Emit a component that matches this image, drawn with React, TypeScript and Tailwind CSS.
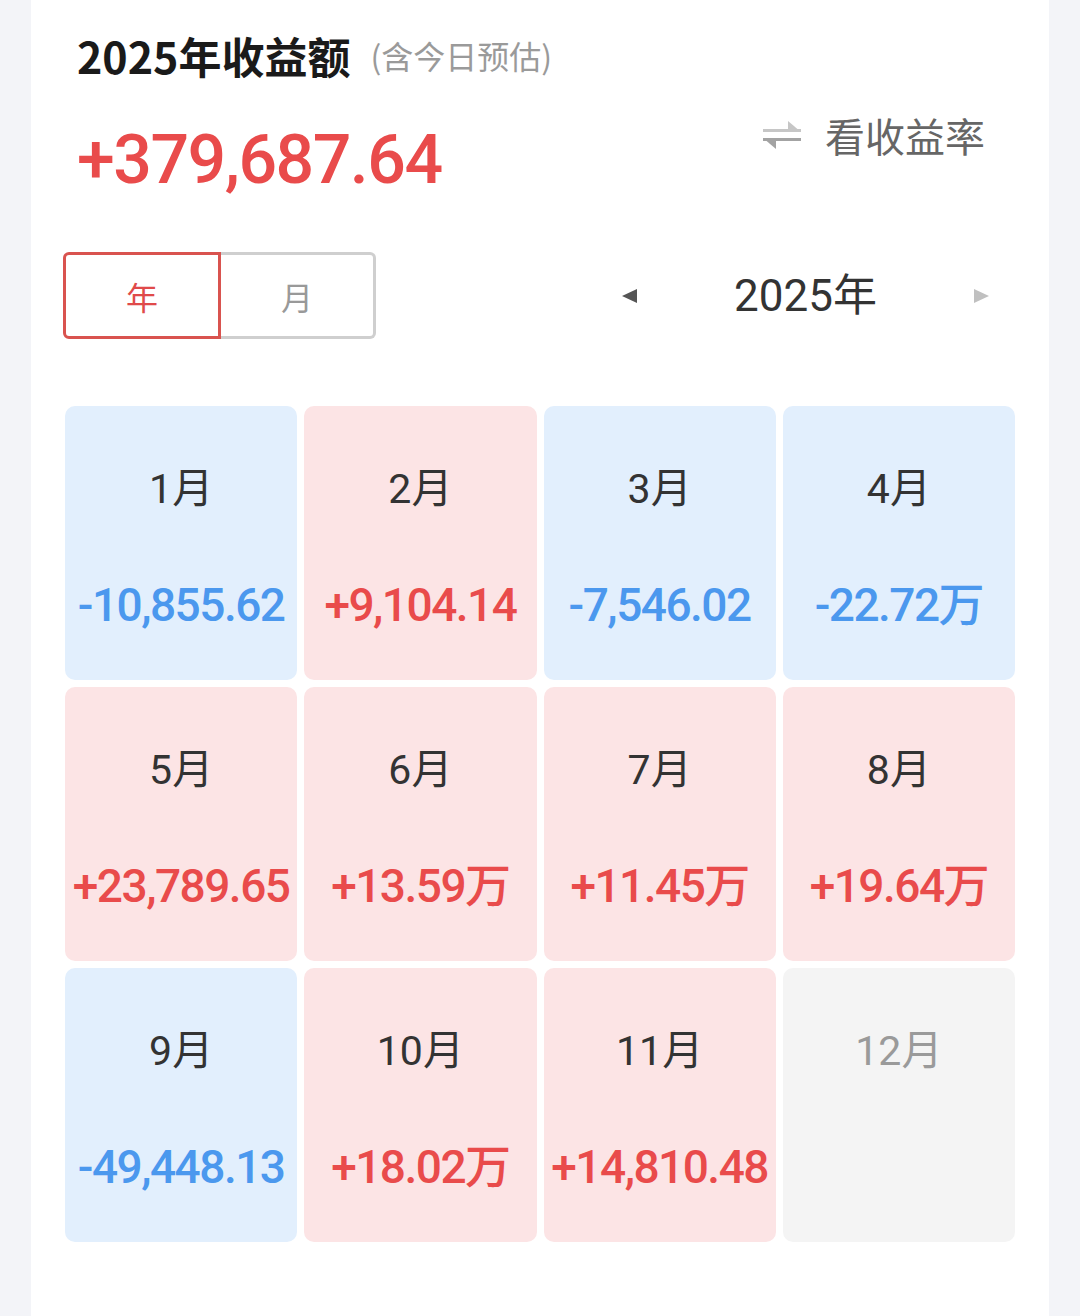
import React from 'react';

type Tone = 'up' | 'down' | 'none';

interface MonthCell {
  label: string;
  value?: string;
  tone: Tone;
}

const months: MonthCell[] = [
  { label: '1月', value: '-10,855.62', tone: 'down' },
  { label: '2月', value: '+9,104.14', tone: 'up' },
  { label: '3月', value: '-7,546.02', tone: 'down' },
  { label: '4月', value: '-22.72万', tone: 'down' },
  { label: '5月', value: '+23,789.65', tone: 'up' },
  { label: '6月', value: '+13.59万', tone: 'up' },
  { label: '7月', value: '+11.45万', tone: 'up' },
  { label: '8月', value: '+19.64万', tone: 'up' },
  { label: '9月', value: '-49,448.13', tone: 'down' },
  { label: '10月', value: '+18.02万', tone: 'up' },
  { label: '11月', value: '+14,810.48', tone: 'up' },
  { label: '12月', tone: 'none' },
];

const cjk = "font-['Noto_Sans_CJK_SC',sans-serif]";
const num = "font-['Roboto','Noto_Sans_CJK_SC',sans-serif]";

// swap arrows next to 看收益率
const SwapIcon = () => (
  <svg width="38" height="28" viewBox="0 0 38 28">
    <path d="M0 9.5h38" stroke="#c6c6c6" strokeWidth="3" />
    <path d="M25 0L38 11H25z" fill="#c6c6c6" />
    <path d="M0 18.5h38" stroke="#a3a3a3" strokeWidth="3" />
    <path d="M13 28L0 17h13z" fill="#a3a3a3" />
  </svg>
);

const Triangle = ({ dir, color }: { dir: 'left' | 'right'; color: string }) => (
  <svg width="15" height="14" viewBox="0 0 15 14">
    <path d={dir === 'left' ? 'M15 0V14L0 7z' : 'M0 0V14L15 7z'} fill={color} />
  </svg>
);

const MonthTile = ({ cell }: { cell: MonthCell }) => {
  const bg =
    cell.tone === 'up' ? 'bg-[#fce4e5]' : cell.tone === 'down' ? 'bg-[#e2effd]' : 'bg-[#f4f4f4]';
  const valueColor = cell.tone === 'up' ? 'text-[#e94b4b]' : 'text-[#4b98ee]';
  return (
    <div className={`h-[274px] rounded-[10px] ${bg} flex flex-col items-center pt-[63px]`}>
      <div
        className={`${num} text-[41px] leading-[40px] ${
          cell.tone === 'none' ? 'text-[#9a9a9a]' : 'text-[#333333]'
        }`}
      >
        {cell.label}
      </div>
      {cell.value && (
        <div
          className={`${num} mt-[72px] text-[46px] leading-[48px] font-medium tracking-[-1.5px] whitespace-nowrap ${valueColor}`}
        >
          {cell.value}
        </div>
      )}
    </div>
  );
};

export default function App() {
  return (
    <div className="min-h-screen bg-[#f3f4f8]">
      <div className="mx-[31px] min-h-[1316px] bg-white px-[34px] pt-[26px]">
        {/* header */}
        <div className="flex justify-between">
          <div className="pl-[12px]">
            <div className="flex items-center h-[58px]">
              <span className={`${cjk} text-[43px] font-bold text-[#1a1a1a]`}>2025年收益额</span>
              <span className={`${cjk} ml-[20px] text-[32px] text-[#9a9a9a]`}>(含今日预估)</span>
            </div>
            <div
              className={`${num} mt-[36px] text-[68px] leading-[80px] font-medium tracking-[-1.5px] text-[#e94b4b]`}
            >
              +379,687.64
            </div>
          </div>
          <div className="flex items-center gap-[24px] pt-[85px] pr-[30px] h-fit">
            <SwapIcon />
            <span className={`${cjk} text-[40px] leading-[48px] text-[#666666]`}>看收益率</span>
          </div>
        </div>

        {/* switch + year */}
        <div className="mt-[52px] flex items-center justify-between">
          <div className={`${cjk} flex h-[87px] w-[313px] -ml-[2px] text-[32px]`}>
            <button className="flex-1 rounded-l-[6px] border-[3px] border-[#d9534f] text-[#e04a4a]">年</button>
            <button className="flex-1 rounded-r-[6px] border-[3px] border-l-0 border-[#cfcfcf] text-[#999999]">
              月
            </button>
          </div>
          <div className="flex items-center pr-[26px]">
            <Triangle dir="left" color="#555555" />
            <span className={`${num} w-[337px] text-center text-[44px] text-[#333333]`}>2025年</span>
            <Triangle dir="right" color="#c0c0c0" />
          </div>
        </div>

        {/* months */}
        <div className="mt-[67px] grid grid-cols-4 gap-[7px]">
          {months.map((m) => (
            <MonthTile key={m.label} cell={m} />
          ))}
        </div>
      </div>
    </div>
  );
}
